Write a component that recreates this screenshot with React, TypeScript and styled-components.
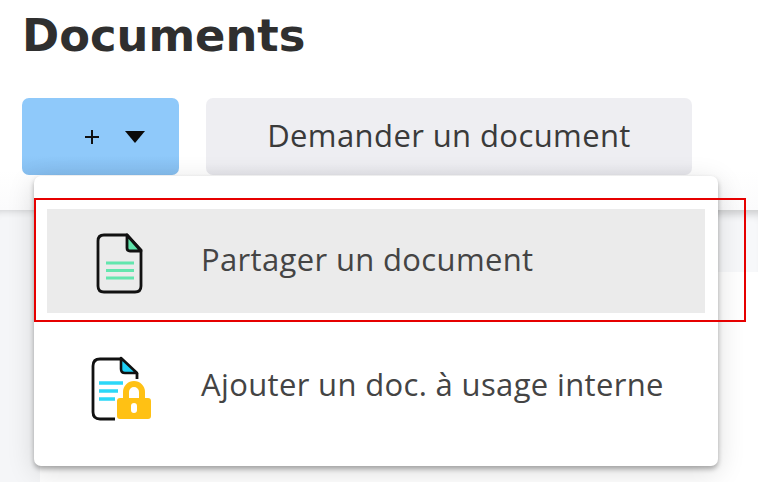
import React from "react";
import styled, { createGlobalStyle } from "styled-components";

const Global = createGlobalStyle`
  html, body { margin: 0; padding: 0; background: #fff; }
  body { width: 781px; height: 482px; overflow: hidden; font-family: "Open Sans", sans-serif; }
`;

const Page = styled.div`
  position: relative;
  width: 758px;
  height: 482px;
  overflow: hidden;
`;

const Header = styled.header`
  height: 210px;
  box-sizing: border-box;
  padding: 9px 0 0 22px;
  background: linear-gradient(#fff 170px, #fbfbfc);
`;

const Title = styled.h1`
  margin: 0;
  height: 89px;
  font-family: "DejaVu Sans", sans-serif;
  font-size: 44.8px;
  line-height: 54px;
  font-weight: 700;
  color: #2f2f2f;
`;

const Actions = styled.div`
  display: flex;
  gap: 27px;
`;

const AddButton = styled.button`
  width: 157px;
  height: 77px;
  box-sizing: border-box;
  padding: 0 0 0 62px;
  display: flex;
  align-items: center;
  gap: 25px;
  border: 0;
  border-radius: 7px;
  background: linear-gradient(#8fc9fa 75%, #85bdee);
`;

const RequestButton = styled.button`
  width: 486px;
  height: 77px;
  padding: 0 0 4px;
  border: 0;
  border-radius: 7px;
  background: linear-gradient(#eeeef2 85%, #e6e6eb);
  font-family: "Open Sans", sans-serif;
  font-size: 31px;
  letter-spacing: 0.4px;
  color: #3a3a3a;
`;

const Body = styled.div`
  display: flex;
  height: 272px;
`;

const Side = styled.aside`
  width: 40px;
  background: #f5f6f8;
  box-shadow: inset 0 8px 8px -8px rgba(0, 0, 0, 0.2);
`;

const Table = styled.div`
  flex: 1;
`;

const TableHead = styled.div`
  height: 62px;
  background: #f7f8fa;
  box-shadow: inset 0 10px 8px -6px rgba(0, 0, 0, 0.18);
`;

const Menu = styled.div`
  position: absolute;
  left: 34px;
  top: 176px;
  width: 684px;
  height: 290px;
  box-sizing: border-box;
  padding: 33px 13px 0;
  display: flex;
  flex-direction: column;
  gap: 20px;
  background: #fff;
  border-radius: 7px;
  box-shadow: 0 3px 5px rgba(0, 0, 0, 0.3), 0 6px 28px rgba(0, 0, 0, 0.14);
`;

const Item = styled.div<{ $active?: boolean }>`
  height: 104px;
  display: flex;
  align-items: center;
  gap: 50px;
  padding-left: 40px;
  background: ${(p) => (p.$active ? "#ebebeb" : "#fff")};
  font-size: 31px;
  letter-spacing: 0.35px;
  color: #444;
`;

const ItemLabel = styled.span<{ $shift: number }>`
  position: relative;
  top: ${(p) => p.$shift}px;
`;

const IconSlot = styled.div`
  width: 64px;
  height: 64px;
  flex: none;
`;

const Highlight = styled.div`
  position: absolute;
  left: 34px;
  top: 198px;
  width: 712px;
  height: 124px;
  box-sizing: border-box;
  border: 2px solid #e60000;
  pointer-events: none;
`;

const DocIcon = () => (
  <svg width="64" height="64" viewBox="0 0 64 64" fill="none" overflow="visible">
    <path
      d="M17 6H40L54 21V57Q54 63 48 63H17Q11 63 11 57V12Q11 6 17 6Z"
      stroke="#111"
      strokeWidth="2.8"
    />
    <path d="M40 6L54 22H43Q40 22 40 19Z" fill="#5fe3ab" stroke="#111" strokeWidth="2.8" strokeLinejoin="round" />
    <path d="M19 34H47M19 41.500H47M19 49H47" stroke="#63e6ae" strokeWidth="3" />
  </svg>
);

const LockDocIcon = () => (
  <svg width="64" height="64" viewBox="0 0 64 64" fill="none" overflow="visible">
    <path d="M34 6H13Q6 6 6 13V59Q6 66 13 66H28" stroke="#111" strokeWidth="2.8" />
    <path d="M50 20V26" stroke="#111" strokeWidth="2.8" />
    <path d="M34 5L50 20H38Q34 20 34 16Z" fill="#1dcff5" stroke="#111" strokeWidth="2.6" strokeLinejoin="round" />
    <path d="M12 30H36M12 38H31M12 46H28" stroke="#2bd8f8" strokeWidth="3.4" />
    <path d="M39 46V39A8 8 0 0 1 55 39V46" stroke="#ffc114" strokeWidth="6" />
    <path
      fillRule="evenodd"
      clipRule="evenodd"
      d="M33 45H61Q64 45 64 48V63Q64 66 61 66H33Q30 66 30 63V48Q30 45 33 45ZM47 50Q44 50 44 53V57Q44 60 47 60Q50 60 50 57V53Q50 50 47 50Z"
      fill="#ffc114"
    />
  </svg>
);

const PlusIcon = () => (
  <svg width="16" height="16" viewBox="0 0 16 16">
    <path d="M8 1V15M1 8H15" stroke="#111" strokeWidth="2" />
  </svg>
);

const CaretIcon = () => (
  <svg width="20" height="12" viewBox="0 0 20 12">
    <path d="M0 0H20L10 12Z" fill="#0a0a0a" />
  </svg>
);

export default function App() {
  return (
    <Page>
      <Global />
      <Header>
        <Title>Documents</Title>
        <Actions>
          <AddButton aria-label="Ajouter">
            <PlusIcon />
            <CaretIcon />
          </AddButton>
          <RequestButton>Demander un document</RequestButton>
        </Actions>
      </Header>
      <Body>
        <Side />
        <Table>
          <TableHead />
        </Table>
      </Body>
      <Menu>
        <Item $active>
          <IconSlot>
            <DocIcon />
          </IconSlot>
          <ItemLabel $shift={-2}>Partager un document</ItemLabel>
        </Item>
        <Item>
          <IconSlot>
            <LockDocIcon />
          </IconSlot>
          <ItemLabel $shift={-1}>Ajouter un doc. à usage interne</ItemLabel>
        </Item>
      </Menu>
      <Highlight />
    </Page>
  );
}
